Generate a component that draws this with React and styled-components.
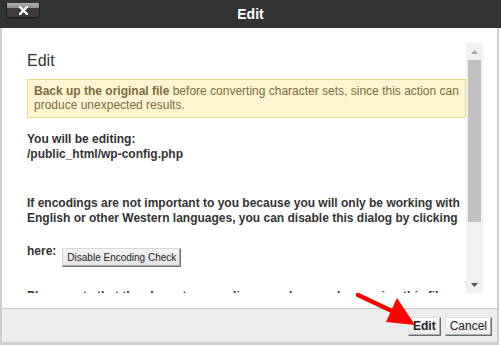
import React from 'react';
import styled, { createGlobalStyle } from 'styled-components';

const GlobalStyle = createGlobalStyle`
  html, body {
    margin: 0;
    padding: 0;
    background: #fff;
  }
  body {
    font-family: 'Liberation Sans', Arial, sans-serif;
    color: #333;
  }
`;

const Page = styled.div`
  position: relative;
  width: 501px;
  height: 345px;
  overflow: hidden;
`;

const Header = styled.div`
  position: relative;
  height: 28px;
  background: #333;
  display: flex;
  align-items: center;
  justify-content: center;
`;

const Title = styled.div`
  color: #fff;
  font-size: 14px;
  font-weight: bold;
  line-height: 28px;
`;

const CloseButton = styled.div`
  position: absolute;
  left: 6px;
  top: 3px;
  width: 32px;
  height: 14px;
  border: 1px solid #1f1f1f;
  border-top: none;
  border-radius: 0 0 4px 4px;
  background: linear-gradient(#b0b0b0 0, #8e8e8e 5px, #3e3b3a 5px);
  box-shadow: 0 1px 0 #2a2a2a;
  display: flex;
  align-items: center;
  justify-content: center;
`;

const Frame = styled.div`
  width: 495px;
  border: 2px solid #cfcfcf;
  border-top: none;
  border-bottom-width: 3px;
`;

const Body = styled.div`
  background: #fff;
  padding: 15px 14px 15px 25px;
  border-bottom: 1px solid #cfcfcf;
`;

const ScrollArea = styled.div`
  height: 250px;
  display: flex;
`;

const Content = styled.div`
  flex: 1;
  overflow: hidden;
`;

const Heading = styled.div`
  font-size: 16px;
  line-height: 18px;
  margin-top: 9px;
  color: #333;
`;

const Warning = styled.div`
  margin-top: 9px;
  background: #fff6d1;
  border: 1px solid #e8d98f;
  color: #7c6a43;
  font-size: 12px;
  line-height: 14px;
  padding: 4px 6px 5px 6px;
`;

const BoldText = styled.div`
  font-size: 12px;
  font-weight: bold;
  line-height: 15px;
  color: #333;
  margin-top: ${p => p.$mt || 0}px;
`;

const Row = styled.div`
  display: flex;
  align-items: flex-start;
  gap: 6px;
  margin-top: 18px;
`;

const SmallButton = styled.div`
  margin-top: 4px;
  font-family: 'Liberation Sans', Arial, sans-serif;
  font-size: 10px;
  line-height: 13px;
  color: #222;
  padding: 2px 4px;
  background: linear-gradient(#f4f4f4, #e4e4e4);
  border: 1px solid #d8d8d8;
  border-right-color: #6f6f6f;
  border-bottom-color: #6f6f6f;
  box-shadow: inset -1px -1px 0 #a8a8a8;
`;

const Scrollbar = styled.div`
  width: 17px;
  background: #f1f1f1;
  display: flex;
  flex-direction: column;
`;

const ScrollButton = styled.div`
  height: 17px;
  display: flex;
  align-items: center;
  justify-content: center;
`;

const Thumb = styled.div`
  margin: 0 2px;
  height: 162px;
  background: #c1c1c1;
`;

const Track = styled.div`
  flex: 1;
`;

const Footer = styled.div`
  height: 33px;
  background: #ededed;
  display: flex;
  align-items: center;
  justify-content: flex-end;
  gap: 4px;
  padding-right: 5px;
`;

const DialogButton = styled.div`
  height: 17px;
  font-size: 12px;
  line-height: 17px;
  font-weight: ${p => (p.$primary ? 'bold' : 'normal')};
  color: #222;
  padding: 0 4px;
  background: linear-gradient(#fdfdfd, #eaeaea);
  border: 1px solid #e0e0e0;
  border-right-color: #6a6a6a;
  border-bottom-color: #6a6a6a;
  box-shadow: inset -1px -1px 0 #b0b0b0;
  margin-top: 1px;
`;

const ArrowOverlay = styled.svg`
  position: absolute;
  left: 0;
  top: 0;
  pointer-events: none;
`;

const App = () => (
  <Page>
    <GlobalStyle />
    <Header>
      <CloseButton>
        <svg width="9" height="9" viewBox="0 0 9 9">
          <path d="M1 1 L8 8 M8 1 L1 8" stroke="#fff" strokeWidth="2.4" strokeLinecap="square" />
        </svg>
      </CloseButton>
      <Title>Edit</Title>
    </Header>
    <Frame>
      <Body>
        <ScrollArea>
          <Content>
            <Heading>Edit</Heading>
            <Warning>
              <b>Back up the original file</b> before converting character sets, since this action can
              produce unexpected results.
            </Warning>
            <BoldText $mt={14}>
              You will be editing:
              <br />
              /public_html/wp-config.php
            </BoldText>
            <BoldText $mt={34}>
              If encodings are not important to you because you will only be working with English or
              other Western languages, you can disable this dialog by clicking
            </BoldText>
            <Row>
              <BoldText>here:</BoldText>
              <SmallButton>Disable Encoding Check</SmallButton>
            </Row>
            <BoldText $mt={22}>
              Please note that the character encoding you choose when saving this file may change it.
            </BoldText>
          </Content>
          <Scrollbar>
            <ScrollButton>
              <svg width="7" height="4" viewBox="0 0 7 4">
                <path d="M0 4 L3.5 0 L7 4 Z" fill="#a3a3a3" />
              </svg>
            </ScrollButton>
            <Thumb />
            <Track />
            <ScrollButton>
              <svg width="7" height="4" viewBox="0 0 7 4">
                <path d="M0 0 L7 0 L3.5 4 Z" fill="#505050" />
              </svg>
            </ScrollButton>
          </Scrollbar>
        </ScrollArea>
      </Body>
      <Footer>
        <DialogButton $primary>Edit</DialogButton>
        <DialogButton>Cancel</DialogButton>
      </Footer>
    </Frame>
    <ArrowOverlay width="501" height="345" viewBox="0 0 501 345">
      <path d="M358 295 L392 311" stroke="#ff0000" strokeWidth="4.5" strokeLinecap="round" />
      <path d="M397 298 L386 322 L415 325 Z" fill="#ff0000" />
    </ArrowOverlay>
  </Page>
);

export default App;
